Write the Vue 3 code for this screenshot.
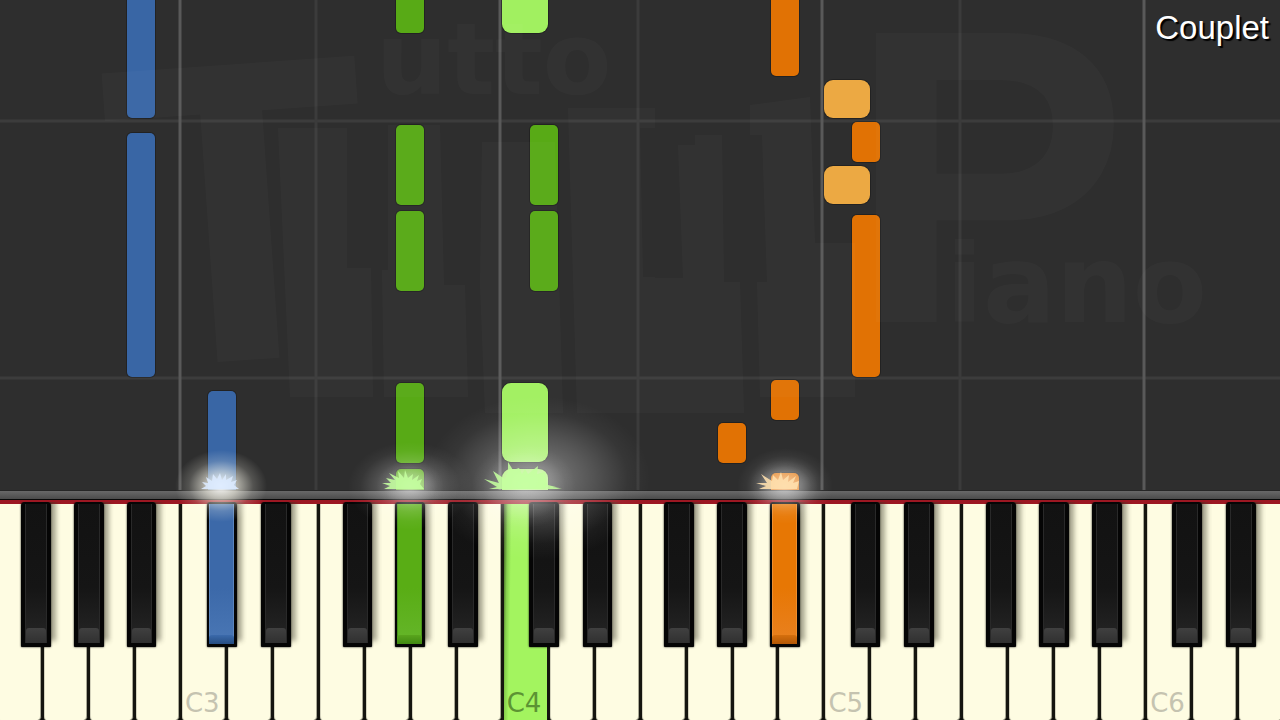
<script setup>
const octaveLines = [180, 500, 822, 1144]
const fLines = [316, 638, 960]
const measureLines = [121, 378]

const notes = [
  { x: 127, y: -12, w: 28, h: 130, tone: 'blue' },
  { x: 127, y: 133, w: 28, h: 244, tone: 'blue' },
  { x: 208, y: 391, w: 28, h: 120, tone: 'blue' },
  { x: 396, y: -12, w: 28, h: 45, tone: 'green' },
  { x: 396, y: 125, w: 28, h: 80, tone: 'green' },
  { x: 396, y: 211, w: 28, h: 80, tone: 'green' },
  { x: 396, y: 383, w: 28, h: 80, tone: 'green' },
  { x: 396, y: 469, w: 28, h: 50, tone: 'green' },
  { x: 530, y: 125, w: 28, h: 80, tone: 'green' },
  { x: 530, y: 211, w: 28, h: 80, tone: 'green' },
  { x: 502, y: -12, w: 46, h: 45, tone: 'lime' },
  { x: 502, y: 383, w: 46, h: 79, tone: 'lime' },
  { x: 502, y: 469, w: 46, h: 50, tone: 'lime' },
  { x: 771, y: -12, w: 28, h: 88, tone: 'orange' },
  { x: 771, y: 380, w: 28, h: 40, tone: 'orange' },
  { x: 771, y: 473, w: 28, h: 40, tone: 'orange' },
  { x: 718, y: 423, w: 28, h: 40, tone: 'orange' },
  { x: 852, y: 122, w: 28, h: 40, tone: 'orange' },
  { x: 852, y: 215, w: 28, h: 162, tone: 'orange' },
  { x: 824, y: 80, w: 46, h: 38, tone: 'amber' },
  { x: 824, y: 166, w: 46, h: 38, tone: 'amber' },
]
const radius = (tone) => (tone === 'lime' || tone === 'amber' ? 9 : 5)

const names = ['C', 'D', 'E', 'F', 'G', 'A', 'B']
const sharps = ['C', 'D', 'F', 'G', 'A']
const held = { 'C#3': 'blue', 'G#3': 'green', C4: 'lime', 'A#4': 'orange' }
const keys = Array.from({ length: 28 }, (_, i) => {
  const n = i + 3
  const name = names[n % 7]
  const octave = 2 + Math.floor(n / 7)
  return {
    id: name + octave,
    name,
    label: name === 'C' ? name + octave : '',
    sharp: sharps.includes(name) ? name + '#' + octave : '',
  }
})
</script>

<template>
  <main class="stage">
    <section class="roll" aria-label="Falling notes">
      <svg class="roll-art" viewBox="0 0 1280 490" preserveAspectRatio="none" aria-hidden="true">
        <line v-for="y in measureLines" :key="'m' + y" class="measure" x1="0" x2="1280" :y1="y" :y2="y" />
        <line v-for="x in fLines" :key="'f' + x" class="half" :x1="x" :x2="x" y1="0" y2="490" />
        <line v-for="x in octaveLines" :key="'o' + x" class="octave" :x1="x" :x2="x" y1="0" y2="490" />

        <rect
          v-for="(n, i) in notes" :key="i" :class="['note', n.tone]"
          :x="n.x" :y="n.y" :width="n.w" :height="n.h" :rx="radius(n.tone)"
        />

        <g class="watermark">
          <text class="mark-big" x="106" y="360" font-size="430" transform="rotate(-4 240 200)">T</text>
          <text class="mark-big" x="848" y="322" font-size="420">P</text>
          <text class="mark-word" x="376" y="94" font-size="100">utto</text>
          <text class="mark-word" x="946" y="322" font-size="108">iano</text>
          <path d="M278 128H347V268H371L373 397H290Z" />
          <path d="M388 125H440L444 285H465L468 397H384L382 270H388Z" />
          <path d="M482 142H555L563 413H485L480 285Z" />
          <path d="M568 108H655V128H640L643 277H655V378H624V413H577Z" />
          <path d="M678 145H695V135H722L724 282H740L744 413H624V378H655V278H683Z" />
          <path d="M750 105L810 97L815 243H855V397H760L757 282H767L762 135H750Z" />
        </g>
      </svg>
      <h1 class="section-name">Couplet</h1>
    </section>

    <div class="rail"></div>

    <section class="keyboard" aria-label="Piano keyboard">
      <div v-for="k in keys" :key="k.id" class="slot">
        <button type="button" :class="['white', held[k.id]]" :aria-label="k.id">{{ k.label }}</button>
        <button
          v-if="k.sharp" type="button" :aria-label="k.sharp"
          :class="['black', 'after-' + k.name.toLowerCase(), held[k.sharp]]"
        ></button>
      </div>
    </section>

    <svg class="effects" viewBox="0 0 1280 720" preserveAspectRatio="none" aria-hidden="true">
      <defs>
        <radialGradient id="glow">
          <stop offset="0" stop-color="#fff" stop-opacity=".95" />
          <stop offset=".35" stop-color="#fffdf0" stop-opacity=".62" />
          <stop offset=".7" stop-color="#fffdf0" stop-opacity=".18" />
          <stop offset="1" stop-color="#fffdf0" stop-opacity="0" />
        </radialGradient>
        <radialGradient id="haze">
          <stop offset="0" stop-color="#fff" stop-opacity=".4" />
          <stop offset=".5" stop-color="#fff" stop-opacity=".18" />
          <stop offset=".8" stop-color="#fff" stop-opacity=".04" />
          <stop offset="1" stop-color="#fff" stop-opacity="0" />
        </radialGradient>
      </defs>
      <ellipse cx="221" cy="486" rx="46" ry="36" fill="url(#glow)" />
      <ellipse cx="410" cy="486" rx="62" ry="44" fill="url(#haze)" />
      <ellipse cx="410" cy="486" rx="34" ry="26" fill="url(#haze)" />
      <ellipse cx="538" cy="478" rx="112" ry="82" fill="url(#haze)" />
      <ellipse cx="524" cy="486" rx="52" ry="42" fill="url(#haze)" />
      <ellipse cx="785" cy="486" rx="48" ry="38" fill="url(#haze)" />
      <ellipse cx="784" cy="486" rx="34" ry="26" fill="url(#haze)" />
      <path class="spark ice" d="M201 489L206 486L202 482L208 483L206 477L212 481L213 474L217 479L220 473L222 480L226 474L226 480L233 476L231 482L237 480L234 485L239 489Z" />
      <path class="spark mint" d="M384 489L390 486L382 483L391 483L386 478L395 480L389 473L399 478L398 471L404 478L405 470L408 478L413 474L412 480L419 475L417 481L422 479L420 484L424 489Z" />
      <path class="spark mint" d="M489 489L497 487L484 479L499 483L493 471L505 479L508 471L508 462L513 470L519 468L522 474L525 469L528 474L538 466L537 474L545 472L548 489L562 489L552 487L560 488L548 485L545 489Z" />
      <path class="spark peach" d="M759 489L766 486L756 483L767 483L761 474L772 481L773 475L778 480L781 472L783 480L789 475L788 482L796 476L793 483L799 481L797 489Z" />
    </svg>
  </main>
</template>

<style>
body { margin: 0; background: #2e2e2e; }
</style>

<style scoped>
.stage {
  position: relative;
  display: flex;
  flex-direction: column;
  height: 100vh;
  overflow: hidden;
  background: #2e2e2e;
}
.roll { position: relative; flex: 490 1 0; min-height: 0; }
.roll-art { display: block; width: 100%; height: 100%; }
.measure { stroke: #3c3c3c; stroke-width: 3; }
.half { stroke: #3b3b3b; stroke-width: 3; }
.octave { stroke: #595959; stroke-width: 3; }
.note { stroke: rgba(0, 0, 0, .25); stroke-width: 2; paint-order: stroke; }
.note.blue { fill: #3966a5; }
.note.green { fill: #58aa16; }
.note.lime { fill: #a1f060; }
.note.orange { fill: #e17204; }
.note.amber { fill: #eca943; }
.watermark { fill: #fff; opacity: .018; }
.mark-big { font-family: "Liberation Sans", Arial, sans-serif; font-weight: 700; }
.mark-word { font-family: "DejaVu Sans", sans-serif; font-weight: 700; }
.section-name {
  position: absolute;
  top: 8px;
  right: 11px;
  margin: 0;
  font: 400 33px/40px "Liberation Sans", Arial, sans-serif;
  color: #fff;
  text-shadow: 2px 2px 1px #000;
}

.rail {
  flex: none;
  height: 14px;
  background: linear-gradient(#262626 0 1px, #686868 1px, #4b4b4b 9px, #080808 9px 10px, #9c1722 10px 14px);
}

.keyboard {
  display: flex;
  flex: 216 1 0;
  min-height: 0;
  margin: 0 -3px 0 -4px;
  background: #0b0b08;
}
.slot { position: relative; flex: 1 1 0; min-width: 0; }
button { border: 0; padding: 0; margin: 0; appearance: none; cursor: pointer; }
.white {
  display: flex;
  align-items: flex-end;
  width: 100%;
  height: 100%;
  padding: 0 0 3px 3px;
  border: solid #15150f;
  border-width: 0 1px 0 2px;
  border-radius: 0 0 4px 4px;
  background: #fefce2;
  box-shadow: inset -1px 0 #aaa995, inset 1px 0 #d5d3bd;
  font: 400 26px/28px "DejaVu Sans", sans-serif;
  color: #c5c3b0;
}
.white.lime {
  background: linear-gradient(91deg, #39591f 0, #86cf4c 4px, #a3f45f 8px);
  box-shadow: none;
  border-radius: 0;
  color: #5c9333;
}
.black {
  position: absolute;
  z-index: 1;
  top: -2px;
  width: 65%;
  height: 67%;
  border-radius: 4px 4px 1px 1px;
  background: #050505;
  box-shadow: 5px -6px 5px rgba(60, 58, 40, .45), 0 0 2px #000;
  clip-path: inset(0 -10px -3px -3px);
}
.black::before {
  content: "";
  position: absolute;
  inset: 2px 4px 4px;
  border: solid #292929;
  border-width: 0 1px;
  background: linear-gradient(#121212, #151515 60%, #262626);
}
.black::after {
  content: "";
  position: absolute;
  inset: auto 5px 4px;
  height: 15px;
  background: linear-gradient(#404040, #303030);
  border-radius: 3px 3px 0 0;
}
.after-c { left: 59%; }
.after-d { left: 76%; }
.after-f { left: 54%; }
.after-g { left: 69%; }
.after-a { left: 84%; }
.black.blue::before { inset: 2px 3px 3px 2px; border-color: #5d86bd; background: linear-gradient(#3c69a9 60%, #4a77b5); }
.black.blue::after { inset: auto 3px 3px 2px; height: 9px; background: linear-gradient(#3b6aab, #264d82); }
.black.green::before { inset: 2px 3px 3px 2px; border-color: #479218; background: linear-gradient(#59ad15 60%, #65b62a); }
.black.green::after { inset: auto 3px 3px 2px; height: 9px; background: linear-gradient(#59a51d, #418911); }
.black.orange::before { inset: 2px 3px 3px 2px; border-color: #ef8d2c; background: linear-gradient(#e77704 60%, #e98120); }
.black.orange::after { inset: auto 3px 3px 2px; height: 9px; background: linear-gradient(#d66f0d, #b25806); }

.effects {
  position: absolute;
  z-index: 2;
  inset: 0;
  width: 100%;
  height: 100%;
  pointer-events: none;
}
.spark { opacity: .88; }
.ice { fill: #dcebff; }
.mint { fill: #c4ff9e; }
.peach { fill: #ffe0ae; }
</style>
